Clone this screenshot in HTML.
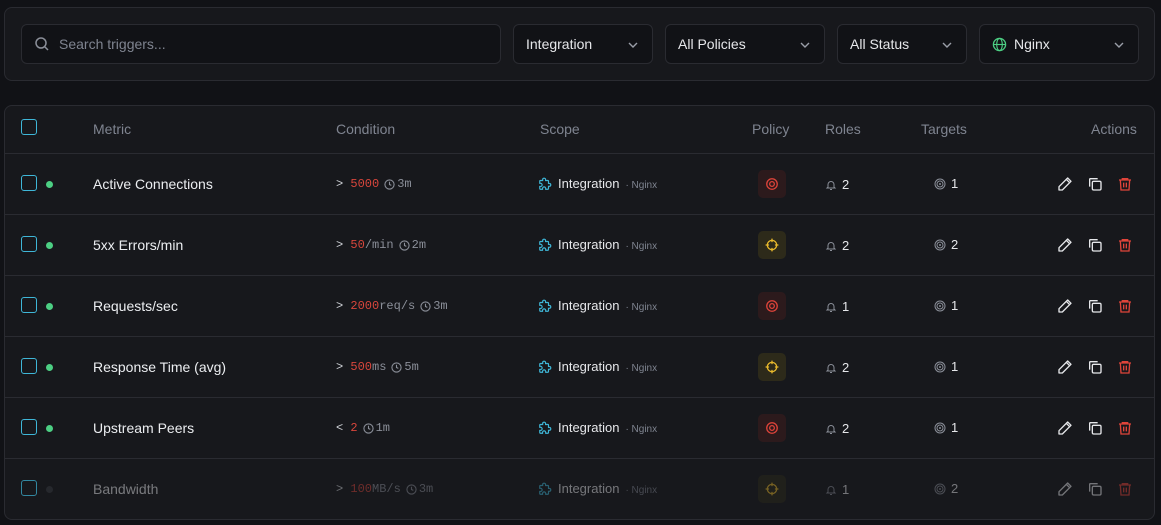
<!DOCTYPE html>
<html><head><meta charset="utf-8"><style>
*{box-sizing:border-box;margin:0;padding:0}
body{width:1161px;height:525px;background:#111216;font-family:"Liberation Sans",sans-serif;color:#e6e7ea;position:relative;overflow:hidden;font-size:14px}
.panel{position:absolute;left:4px;width:1151px;background:#17181c;border:1px solid #2a2b31;border-radius:8px}
.inp{position:absolute;top:24px;height:40px;border:1px solid #2a2b31;border-radius:6px;background:#111216;display:flex;align-items:center;padding:0 12px;font-size:14px;color:#e6e7ea}
.inp .chev{position:absolute;right:13px;top:14px}
.hdr{position:absolute;top:121px;font-size:14px;color:#7f8490}
.row{position:absolute;left:5px;width:1149px;height:61px;border-top:1px solid #2a2b31}
.cb{position:absolute;left:16px;width:16px;height:16px;border:1.5px solid #3fb7d8;border-radius:3px}
.dot{position:absolute;left:41px;top:27px;width:7px;height:7px;border-radius:50%;background:#4ccf83}
.name{position:absolute;left:88px;top:22px;font-size:14px;color:#eceef1}
.cond{position:absolute;left:331px;top:23px;font-family:"Liberation Mono",monospace;font-size:12px;color:#cfd2d7;display:flex;align-items:center}
.cond .v{color:#d8463c}
.cond .u{color:#8b8f99}
.cond .t{color:#8b8f99;margin-left:5px;display:flex;align-items:center;gap:2px}
.scope{position:absolute;left:533px;top:22px;display:flex;align-items:baseline;font-size:13px;color:#e6e7ea}
.scope svg{align-self:center}
.scope .n{font-size:10px;color:#7f8490;margin-left:6px}
.pol{position:absolute;left:753px;top:16px;width:28px;height:28px;border-radius:5px;display:flex;align-items:center;justify-content:center}
.roles{position:absolute;left:820px;top:23px;display:flex;align-items:center;gap:5px;font-size:13px}
.tg{position:absolute;left:929px;top:22px;display:flex;align-items:center;gap:5px;font-size:13px}
.act{position:absolute;top:22px}
.dim>*:not(.cb){opacity:.45}
</style></head><body>
<div class="panel" style="top:7px;height:74px"></div>
<div class="inp" style="left:21px;width:480px;color:#7f8490"><svg width="16" height="16" viewBox="0 0 16 16" style="margin-right:9px"><circle cx="7" cy="7" r="5" fill="none" stroke="#8b8f99" stroke-width="1.5"/><path d="M11 11l3 3" stroke="#8b8f99" stroke-width="1.5"/></svg>Search triggers...</div>
<div class="inp" style="left:513px;width:140px">Integration<svg class="chev" width="12" height="12" viewBox="0 0 12 12"><path d="M2 4l4 4 4-4" fill="none" stroke="#9a9ea8" stroke-width="1.4"/></svg></div>
<div class="inp" style="left:665px;width:160px">All Policies<svg class="chev" width="12" height="12" viewBox="0 0 12 12"><path d="M2 4l4 4 4-4" fill="none" stroke="#9a9ea8" stroke-width="1.4"/></svg></div>
<div class="inp" style="left:837px;width:130px">All Status<svg class="chev" width="12" height="12" viewBox="0 0 12 12"><path d="M2 4l4 4 4-4" fill="none" stroke="#9a9ea8" stroke-width="1.4"/></svg></div>
<div class="inp" style="left:979px;width:160px"><svg width="15" height="15" viewBox="0 0 16 16" style="margin-right:7px"><circle cx="8" cy="8" r="6.5" fill="none" stroke="#4ccf83" stroke-width="1.4"/><ellipse cx="8" cy="8" rx="3" ry="6.5" fill="none" stroke="#4ccf83" stroke-width="1.2"/><path d="M1.5 8h13" stroke="#4ccf83" stroke-width="1.2"/></svg>Nginx<svg class="chev" width="12" height="12" viewBox="0 0 12 12"><path d="M2 4l4 4 4-4" fill="none" stroke="#9a9ea8" stroke-width="1.4"/></svg></div>

<div class="panel" style="top:105px;height:415px"></div>
<div class="cb" style="left:21px;top:119px"></div>
<div class="hdr" style="left:93px">Metric</div>
<div class="hdr" style="left:336px">Condition</div>
<div class="hdr" style="left:540px">Scope</div>
<div class="hdr" style="left:752px">Policy</div>
<div class="hdr" style="left:825px">Roles</div>
<div class="hdr" style="left:921px">Targets</div>
<div class="hdr" style="left:1091px">Actions</div>

<div id="rows"></div>
<script>
const rows=[["Active Connections",">","5000","","3m","r",2,1],["5xx Errors/min",">","50","/min","2m","y",2,2],["Requests/sec",">","2000","req/s","3m","r",1,1],["Response Time (avg)",">","500","ms","5m","y",2,1],["Upstream Peers","<","2","","1m","r",2,1],["Bandwidth",">","100","MB/s","3m","y",1,2]];
const clock='<svg width="11" height="11" viewBox="0 0 12 12"><circle cx="6" cy="6" r="5" fill="none" stroke="#8b8f99" stroke-width="1.2"/><path d="M6 3v3l2 1" fill="none" stroke="#8b8f99" stroke-width="1.2"/></svg>';
const puzzle='<svg width="14" height="14" viewBox="0 0 24 24" style="margin-right:6px"><path d="M19.4 11H18V7a1 1 0 0 0-1-1h-4V4.5a2.5 2.5 0 0 0-5 0V6H4a1 1 0 0 0-1 1v3.8h1.4a2.7 2.7 0 0 1 0 5.4H3V20a1 1 0 0 0 1 1h3.8v-1.4a2.7 2.7 0 0 1 5.4 0V21H17a1 1 0 0 0 1-1v-4h1.4a2.5 2.5 0 0 0 0-5z" fill="none" stroke="#3fb7d8" stroke-width="2"/></svg>';
const bell='<svg width="12" height="12" viewBox="0 0 24 24"><path d="M6 16V11a6 6 0 0 1 12 0v5l2 2H4z M10 21h4" fill="none" stroke="#8b8f99" stroke-width="2"/></svg>';
const tgt='<svg width="12" height="12" viewBox="0 0 24 24"><circle cx="12" cy="12" r="10" fill="none" stroke="#8b8f99" stroke-width="2"/><circle cx="12" cy="12" r="6" fill="none" stroke="#8b8f99" stroke-width="2"/><circle cx="12" cy="12" r="2" fill="#8b8f99"/></svg>';
const polR='<svg width="14" height="14" viewBox="0 0 24 24"><circle cx="12" cy="12" r="9" fill="none" stroke="#e0443a" stroke-width="2.2"/><circle cx="12" cy="12" r="4" fill="none" stroke="#e0443a" stroke-width="2.2"/></svg>';
const polY='<svg width="14" height="14" viewBox="0 0 24 24"><circle cx="12" cy="12" r="8" fill="none" stroke="#e8b92c" stroke-width="2.2"/><path d="M12 1v6M12 17v6M1 12h6M17 12h6" stroke="#e8b92c" stroke-width="2.2"/></svg>';
const pencil='<svg width="16" height="16" viewBox="0 0 24 24"><path d="M16 3l5 5L8 21H3v-5z M14 5l5 5" fill="none" stroke="#e6e7ea" stroke-width="2" stroke-linejoin="round"/></svg>';
const copy='<svg width="16" height="16" viewBox="0 0 24 24"><rect x="8" y="8" width="13" height="13" rx="2" fill="none" stroke="#e6e7ea" stroke-width="2"/><path d="M4 16V5a1 1 0 0 1 1-1h11" fill="none" stroke="#e6e7ea" stroke-width="2"/></svg>';
const trash='<svg width="16" height="16" viewBox="0 0 24 24"><path d="M3 6h18M8 6V4h8v2M5 6l1 15h12l1-15M10 10v7M14 10v7" fill="none" stroke="#e0443a" stroke-width="2"/></svg>';
let h='';
rows.forEach((r,i)=>{
 const top=153+i*61;
 h+=`<div class="row${i==5?' dim':''}" style="top:${top}px">
 <div class="cb" style="top:21px${i==5?';opacity:.7':''}"></div>
 <div class="dot" style="${i==5?'background:#3a3c42':''}"></div>
 <div class="name">${r[0]}</div>
 <div class="cond">${r[1]==">"?"&gt;":"&lt;"}&nbsp;<span class="v">${r[2]}</span><span class="u">${r[3]}</span><span class="t">${clock}${r[4]}</span></div>
 <div class="scope">${puzzle}Integration<span class="n">· Nginx</span></div>
 <div class="pol" style="background:${r[5]=='r'?'#2c1a1c':'#2d2a1a'}">${r[5]=='r'?polR:polY}</div>
 <div class="roles">${bell}${r[6]}</div>
 <div class="tg">${tgt}${r[7]}</div>
 <div class="act" style="left:1052px">${pencil}</div>
 <div class="act" style="left:1082px">${copy}</div>
 <div class="act" style="left:1112px">${trash}</div>
 </div>`;
});
document.getElementById('rows').innerHTML=h;
</script>
</body></html>
